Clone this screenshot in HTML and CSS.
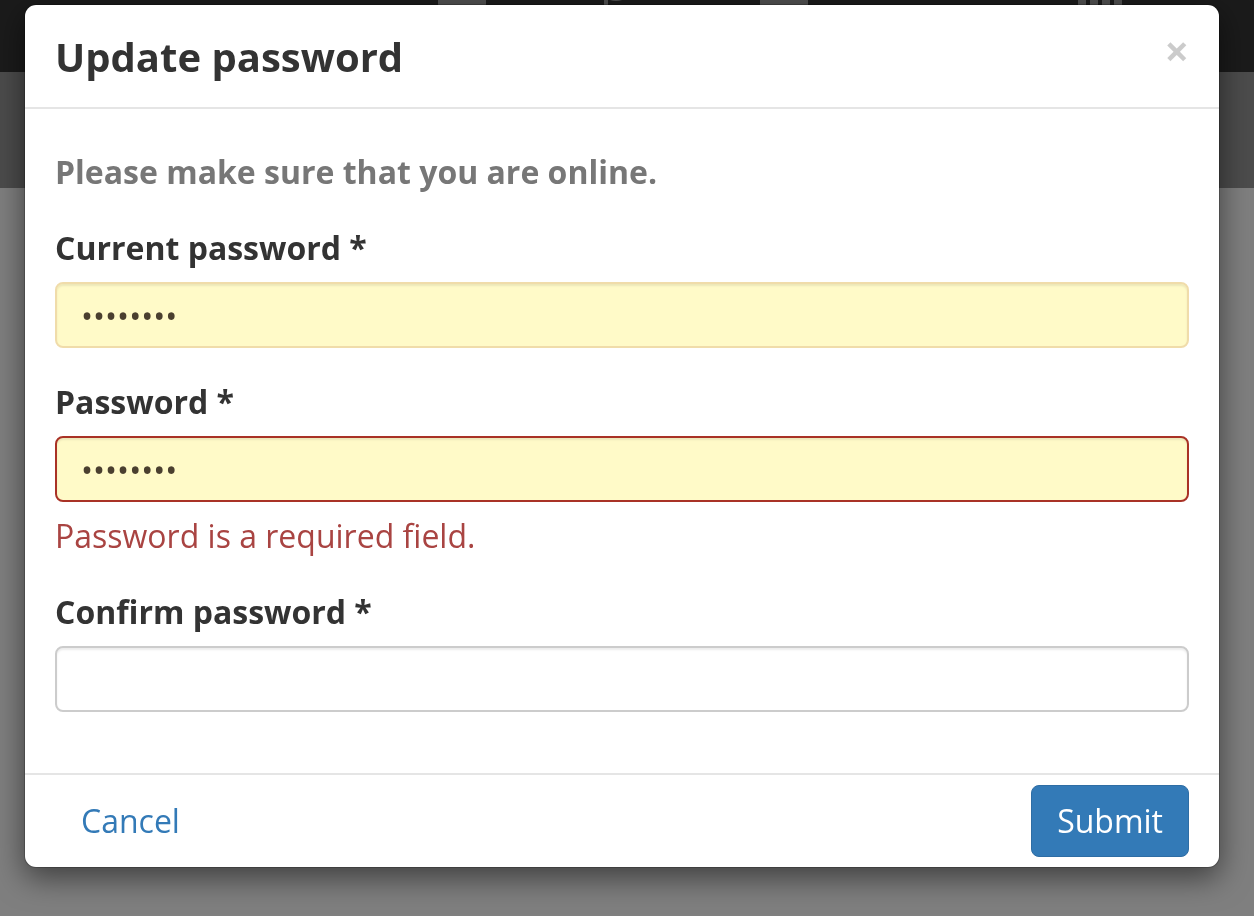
FILE: index.html
```html
<!DOCTYPE html>
<html lang="en">
<head>
<meta charset="utf-8">
<title>Update password</title>
<link rel="stylesheet" href="styles.css">
</head>
<body>
<div class="page">
  <nav class="navbar">
    <div class="nav-icons">
      <svg class="nav-icon i1" viewBox="0 0 48 30"><rect x="0" y="0" width="48" height="30" rx="4"/><path class="ink" d="M16 2 L22 8 L32 -2" /></svg>
      <svg class="nav-icon i2" viewBox="0 0 44 30"><path d="M2 0 V30 M2 4 Q12 -2 22 4 T42 4 V18 Q32 12 22 18 T2 18"/></svg>
      <svg class="nav-icon i3" viewBox="0 0 48 30"><rect x="0" y="0" width="48" height="30" rx="3"/><rect class="ink" x="6" y="2" width="36" height="4"/></svg>
      <svg class="nav-icon i4" viewBox="0 0 34 30"><circle cx="17" cy="8" r="14"/></svg>
      <svg class="nav-icon i5" viewBox="0 0 48 30"><rect x="2" y="0" width="8" height="30"/><rect x="14" y="0" width="8" height="30"/><rect x="26" y="0" width="8" height="30"/><rect x="38" y="0" width="8" height="30"/></svg>
    </div>
  </nav>
  <div class="subbar"></div>
  <div class="content"></div>
</div>
<div class="backdrop"></div>
<div class="modal" role="dialog" aria-labelledby="modal-title">
  <div class="modal-header">
    <h4 class="modal-title" id="modal-title">Update password</h4>
    <button class="close" type="button" aria-label="Close">&times;</button>
  </div>
  <form class="modal-body">
    <p class="notice">Please make sure that you are online.</p>
    <div class="form-group">
      <label class="control-label" for="current">Current password *</label>
      <input class="form-control autofill" id="current" type="password" value="12345678">
    </div>
    <div class="form-group">
      <label class="control-label" for="password">Password *</label>
      <input class="form-control autofill invalid" id="password" type="password" value="12345678">
      <div class="error">Password is a required field.</div>
    </div>
    <div class="form-group">
      <label class="control-label" for="confirm">Confirm password *</label>
      <input class="form-control" id="confirm" type="password">
    </div>
  </form>
  <div class="modal-footer">
    <button class="btn btn-link" type="button">Cancel</button>
    <button class="btn btn-primary" type="button">Submit</button>
  </div>
</div>
</body>
</html>
```
FILE: styles.css
```css
html, body {
  margin: 0;
  padding: 0;
}

body {
  width: 1254px;
  height: 916px;
  overflow: hidden;
  font-family: "Open Sans", "DejaVu Sans", sans-serif;
  background: #ffffff;
}

.page {
  display: flex;
  flex-direction: column;
  height: 916px;
}

.navbar {
  height: 72px;
  background: #363636;
  overflow: hidden;
}

.nav-icons {
  display: flex;
  align-items: flex-start;
  padding-left: 438px;
  margin-top: -22px;
}

.nav-icon {
  height: 30px;
  fill: #a0a0a0;
  stroke: none;
}

.nav-icon .ink {
  fill: #363636;
  stroke: #363636;
  stroke-width: 3;
}

.i1 { width: 48px; }
.i2 { width: 44px; margin-left: 118px; fill: none; stroke: #a0a0a0; stroke-width: 4; }
.i3 { width: 48px; margin-left: 112px; }
.i4 { width: 34px; margin-left: 118px; }
.i5 { width: 48px; margin-left: 116px; }

.subbar {
  height: 116px;
  background: #999999;
}

.content {
  flex: 1;
  background: #ffffff;
}

.backdrop {
  position: fixed;
  inset: 0;
  background: rgba(0, 0, 0, 0.5);
}

.modal {
  position: absolute;
  top: 4px;
  left: 24px;
  width: 1196px;
  box-sizing: border-box;
  background: #ffffff;
  border: 1px solid rgba(0, 0, 0, 0.2);
  border-radius: 12px;
  box-shadow: 0 10px 30px rgba(0, 0, 0, 0.5);
  background-clip: padding-box;
}

.modal-header {
  display: flex;
  align-items: flex-start;
  padding: 29px 30px 27px;
  border-bottom: 2px solid #e5e5e5;
}

.modal-title {
  flex: 1;
  margin: 0;
  font-size: 40px;
  line-height: 46px;
  font-weight: 700;
  color: #333333;
}

.close {
  margin-top: -4px;
  padding: 0;
  border: 0;
  background: none;
  font-family: "Open Sans", "DejaVu Sans", sans-serif;
  font-size: 43px;
  line-height: 42px;
  font-weight: 700;
  color: #000000;
  opacity: 0.2;
  cursor: pointer;
}

.modal-body {
  padding: 41px 30px 29px;
  margin: 0;
}

.notice {
  margin: 0 0 32px;
  font-size: 32px;
  line-height: 44px;
  font-weight: 700;
  color: #777777;
}

.form-group {
  margin-bottom: 32px;
}

.control-label {
  display: block;
  margin-bottom: 12px;
  font-size: 32px;
  line-height: 44px;
  font-weight: 700;
  color: #333333;
}

.form-control {
  display: block;
  width: 100%;
  height: 66px;
  box-sizing: border-box;
  margin: 0;
  padding: 0 24px;
  border: 2px solid #cccccc;
  border-radius: 8px;
  background: #ffffff;
  box-shadow: inset 0 2px 2px rgba(0, 0, 0, 0.075);
  font-family: "Open Sans", "DejaVu Sans", sans-serif;
  font-size: 32px;
  color: #555555;
  outline: none;
}

.form-control.autofill {
  background: #fffac8;
  border-color: #f0dcaa;
  color: #4a3f2f;
}

.form-control.invalid {
  border-color: #a93226;
}

.error {
  margin-top: 12px;
  font-size: 32px;
  line-height: 44px;
  color: #a94442;
}

.modal-footer {
  display: flex;
  justify-content: space-between;
  align-items: center;
  padding: 10px 30px;
  border-top: 2px solid #e5e5e5;
}

.btn {
  margin: 0;
  padding: 12px 25px;
  border: 1px solid transparent;
  border-radius: 8px;
  font-family: "Open Sans", "DejaVu Sans", sans-serif;
  font-size: 32px;
  line-height: 46px;
  font-weight: 400;
  cursor: pointer;
}

.btn-link {
  background: none;
  color: #337ab7;
}

.btn-primary {
  background: #337ab7;
  border-color: #2e6da4;
  color: #ffffff;
}
```
